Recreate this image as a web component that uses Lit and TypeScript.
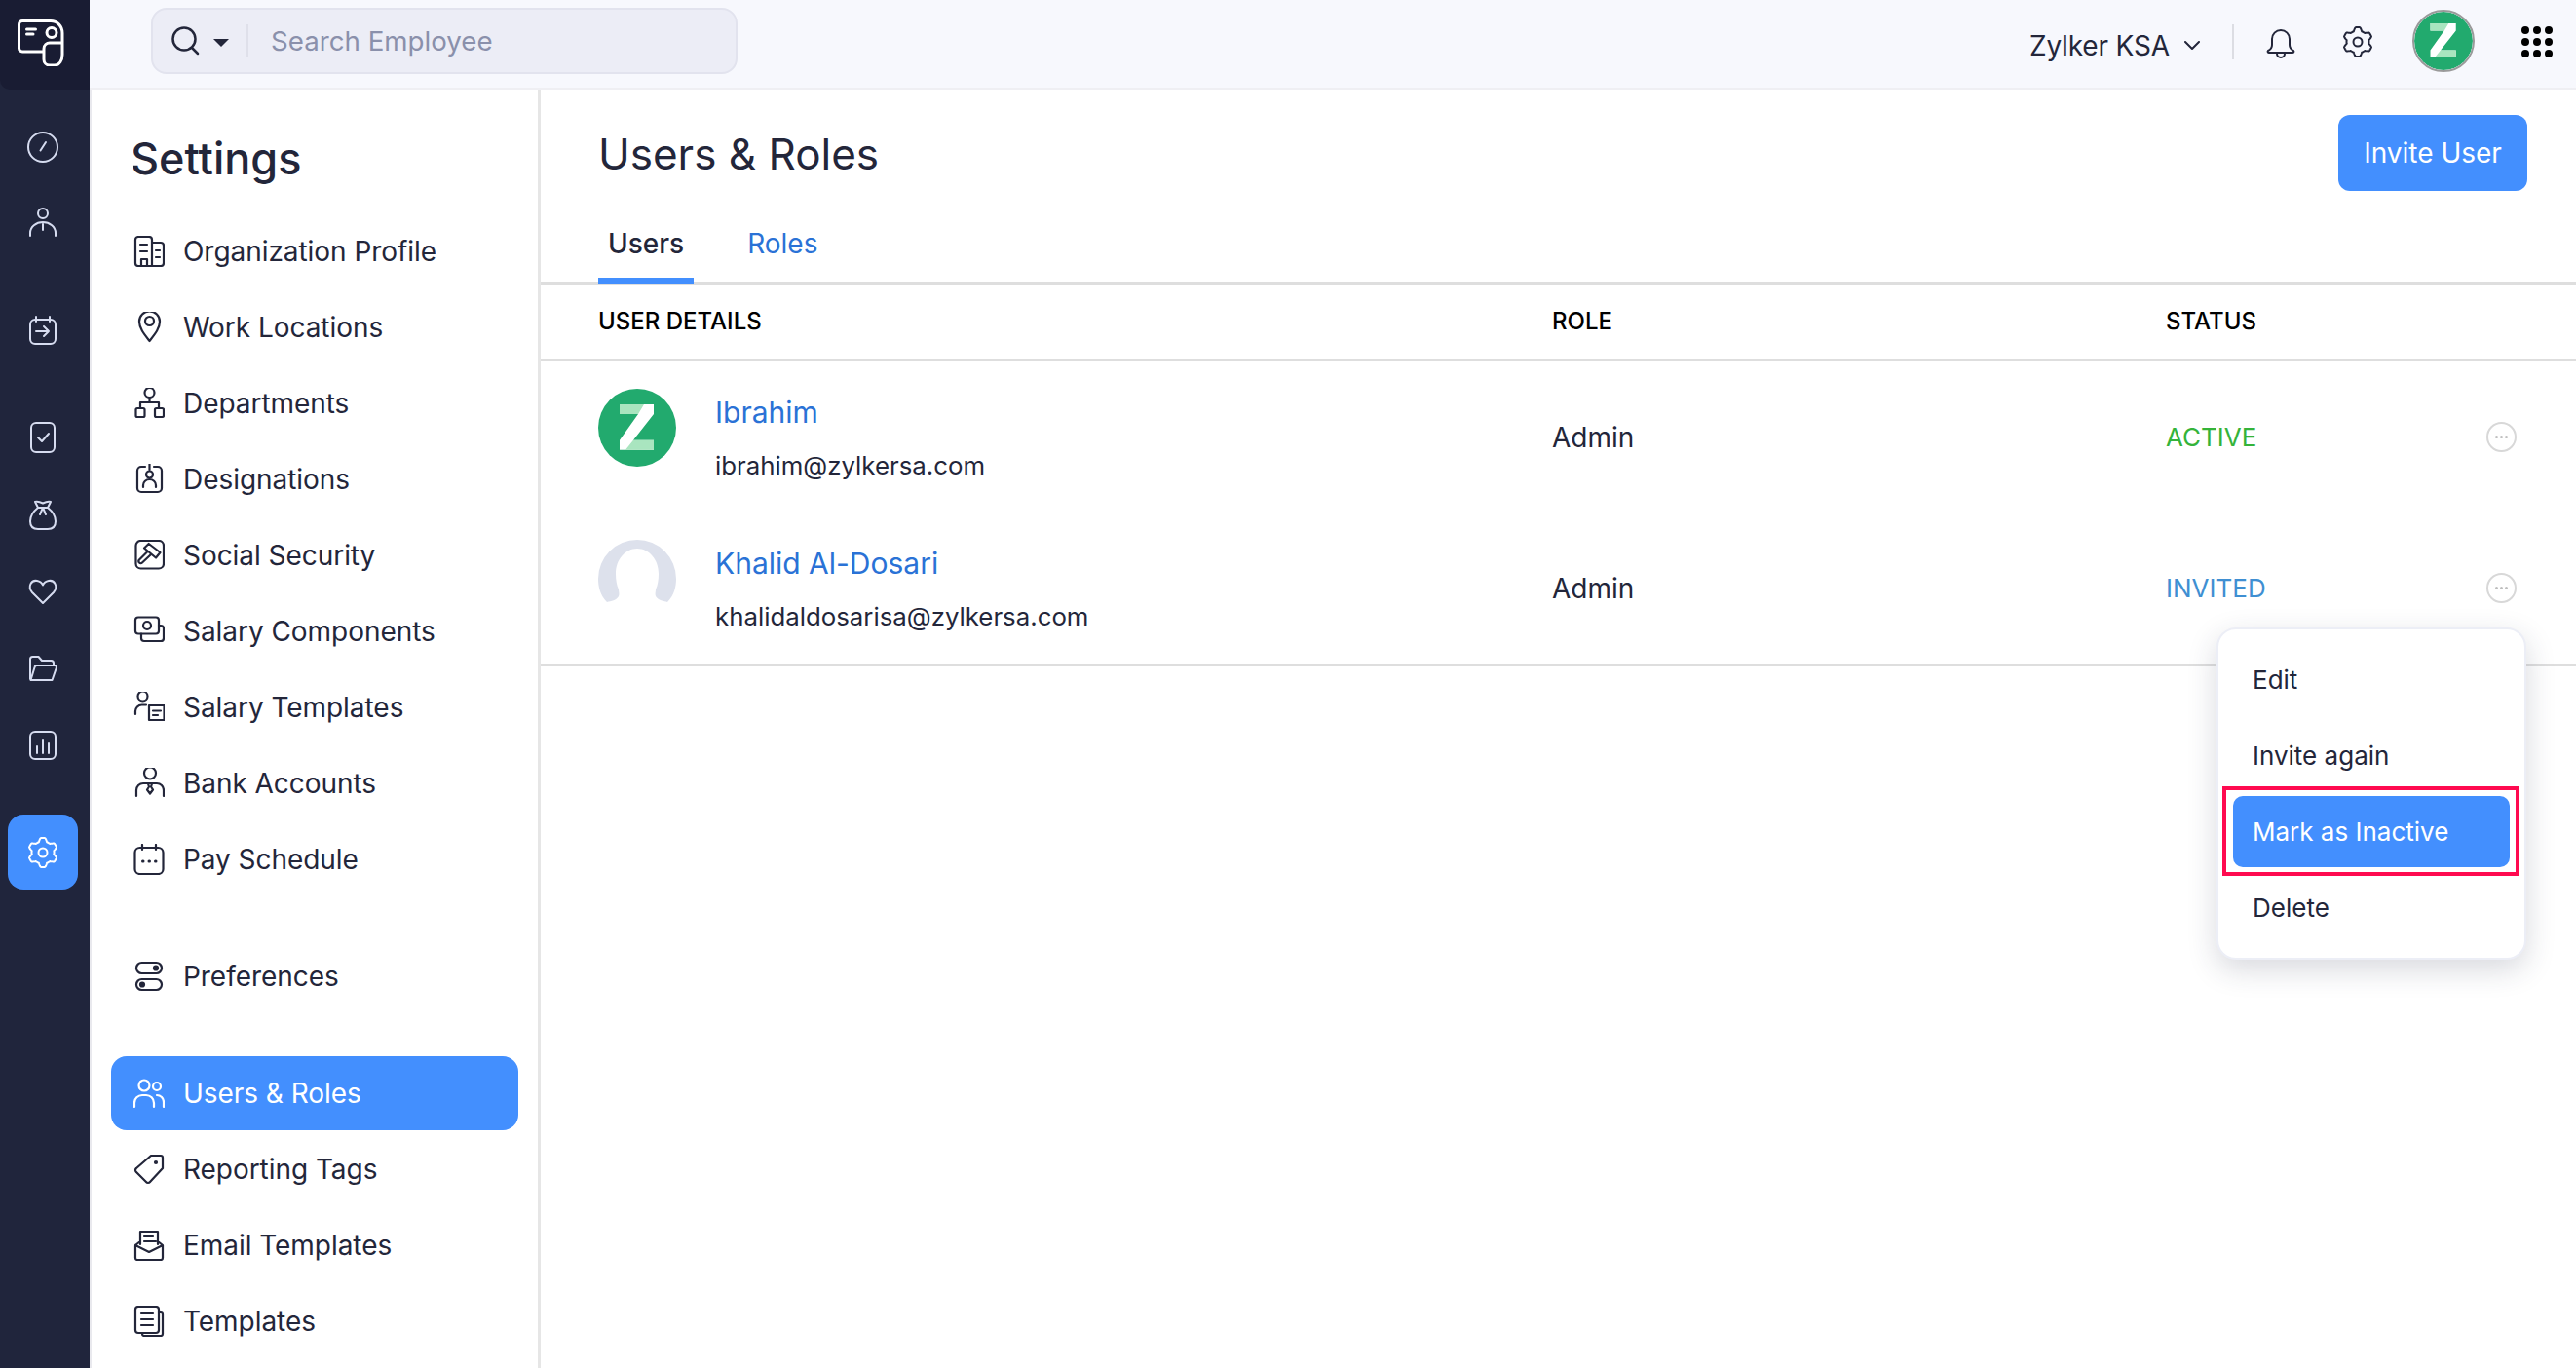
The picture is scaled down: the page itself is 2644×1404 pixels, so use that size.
import { LitElement, html, css, svg } from 'lit';
import { customElement } from 'lit/decorators.js';

// six lobed cog, sampled so the lobes stay round at any size
function gearPath(cx: number, cy: number, outer: number, inner: number) {
  const pts: string[] = [];
  for (let i = 0; i < 120; i++) {
    const a = (i / 120) * Math.PI * 2;
    const k = Math.min(1, Math.max(0, 0.5 + 0.85 * Math.cos(a * 6)));
    const r = inner + (outer - inner) * k;
    pts.push(`${(cx + r * Math.sin(a)).toFixed(2)} ${(cy - r * Math.cos(a)).toFixed(2)}`);
  }
  return `M${pts.join('L')}Z`;
}

const icon = (body: unknown, size = 32) => html`<svg
  class="ico"
  width=${size}
  height=${size}
  viewBox="0 0 32 32"
  fill="none"
  stroke="currentColor"
  stroke-width="2"
  stroke-linecap="round"
  stroke-linejoin="round"
>${body}</svg>`;

const gear = svg`<path d=${gearPath(16, 16, 15, 11.5)} /><circle cx="16" cy="16" r="4.5" />`;

const railIcons = {
  gauge: svg`<circle cx="16" cy="16" r="15" /><path d="M13.5 19.5 19 11" />`,
  person: svg`<circle cx="16" cy="7" r="5" /><path d="M3 30v-3a13 11 0 0 1 26 0v3M16 18v6" />`,
  calendar: svg`<rect x="3" y="5" width="26" height="25" rx="5" /><path d="M9 2v5M23 2v5M9 17h13M17 12l5 5-5 5" />`,
  check: svg`<rect x="4" y="1" width="24" height="30" rx="5" /><path d="M11 16l4 4 7-8" />`,
  bag: svg`<path d="M11 9C6 13 3 18 3 23c0 5 3 8 8 8h10c5 0 8-3 8-8 0-5-3-10-8-14M11 9 8 3c3-1 5 0 8 1.500C19 3 21 2 24 3l-3 6M11 9h10M16 9l-3 7M16 9l3 7" />`,
  heart: svg`<path d="M16 28 5 17C0 11 4 4 10 5c3 .5 5 2 6 4.500C17 7 19 5.500 22 5c6-1 10 6 5 12Z" />`,
  folder: svg`<path d="M3 27V6.500A2.500 2.500 0 0 1 5.500 4h6l3.500 4h9.500A2.500 2.500 0 0 1 27 10.500V13M3.500 28h22l4.500-13a2 2 0 0 0-2-2H10a2.500 2.500 0 0 0-2.500 2L3.500 28Z" />`,
  chart: svg`<rect x="3" y="2" width="26" height="28" rx="5" /><path d="M10 17v7M16 10v14M22 14v10" />`,
};

const menuIcons = {
  building: svg`<path d="M19 31H5a3 3 0 0 1-3-3V4a3 3 0 0 1 3-3h11a3 3 0 0 1 3 3v27ZM19 7h9a3 3 0 0 1 3 3v18a3 3 0 0 1-3 3h-9M7 9h7M7 16h7M8 31v-7h6v7M23 15h4M23 22h4" />`,
  pin: svg`<path d="M16.500 30C11 23 6 17 6 10A10.500 10.500 0 0 1 27 10c0 7-5 13-10.500 20Z" /><circle cx="16.500" cy="9.500" r="4.500" />`,
  tree: svg`<circle cx="16.500" cy="5" r="5" /><path d="M16.500 10v5M7 21v-6h19v6" /><rect x="2.500" y="21" width="9" height="9" rx="1.500" /><rect x="22" y="21" width="9" height="9" rx="1.500" />`,
  badge: svg`<path d="M12 3H8a4 4 0 0 0-4 4v18a4 4 0 0 0 4 4h17a4 4 0 0 0 4-4V7a4 4 0 0 0-4-4h-4M16.500 0v6" /><circle cx="16.500" cy="11" r="3.500" /><path d="M10 24v-2a6.500 6 0 0 1 13 0v2" />`,
  gavel: svg`<rect x="2.500" y="1" width="28.500" height="28.500" rx="5" /><path d="M15.700 4 11 8.500 23 18.500 27.500 13ZM14.500 12 6 20.500c-1 1-1 2 0 3s2 1 3 0l8.500-8" />`,
  cards: svg`<rect x="2" y="1.500" width="24" height="17" rx="3" /><path d="M26 10h2a3 3 0 0 1 3 3v10a3 3 0 0 1-3 3H11a3 3 0 0 1-3-3v-4.500" /><circle cx="14" cy="10" r="4" />`,
  personDoc: svg`<circle cx="9.500" cy="4.500" r="5" /><path d="M2 23v-3a6.500 6.500 0 0 1 6.500-6.500H13" /><rect x="16" y="14" width="15.500" height="15" /><path d="M20 19.500h8M20 24h5" />`,
  tie: svg`<circle cx="17" cy="5.500" r="6" /><path d="M3 29v-6a7 7 0 0 1 7-7h14a7 7 0 0 1 7 7v6M15 16.500l1 3-2 3 3 4 3-4-2-3 1-3" />`,
  calDots: svg`<rect x="1.500" y="4" width="29" height="27" rx="5" /><path d="M9 1v5M23 1v5" /><path d="M9.500 18h.5M16 18h.5M22.500 18h.5" stroke-width="3" />`,
  toggles: svg`<rect x="3" y="2" width="26" height="11" rx="5.500" /><rect x="3" y="19" width="26" height="11" rx="5.500" /><circle cx="23" cy="7.500" r="2" fill="currentColor" /><circle cx="9" cy="24.500" r="2" fill="currentColor" />`,
  users: svg`<circle cx="11" cy="8" r="5.500" /><circle cx="24" cy="9" r="4" /><path d="M1 30v-4a8 8 0 0 1 8-8h4a8 8 0 0 1 8 8v4M24 18a7 7 0 0 1 7 7v5" />`,
  tag: svg`<path d="M18 2h10a2 2 0 0 1 2 2v11L17 29a2.500 2.500 0 0 1-4 0L3 19a2.500 2.500 0 0 1 0-4Z" /><circle cx="23" cy="9" r="1" fill="currentColor" />`,
  mail: svg`<path d="M7 15V2h18v13M2 16v13a2 2 0 0 0 2 2h24a2 2 0 0 0 2-2V16l-14 7Zm0 0 5-4M30 16l-5-4M11 7h9M11 12h12" />`,
  docs: svg`<path d="M26 7h2a2 2 0 0 1 2 2v20a2 2 0 0 1-2 2H11a2 2 0 0 1-2-2v-1" /><rect x="2" y="1" width="24" height="27" rx="3" /><path d="M8 8h12M8 14h12M8 20h12" />`,
};

const zMark = (size: number) => html`<svg class="z" width=${size} height=${size} viewBox="0 0 80 80">
  <circle cx="40" cy="40" r="40" fill="#22aa6e" />
  <path d="M22 16H57V26L36 52.700H57V62.700H22V52.700L41 26H22Z" fill="#fff" />
  <path d="M22 16H47L41 26H22ZM36 52.700H57V62.700H28Z" fill="#a9e5bf" />
</svg>`;

const blankAvatar = html`<svg class="z" width="80" height="80" viewBox="0 0 80 80">
  <path
    d="M9 64C2 57 0 48 0 40a40 40 0 0 1 80 0c0 8-2 17-9 24-3-1-10-2-12-6-1-2 0-5 0-7 2-4 3-10 3-16C62 20 52 9 40 9S18 20 18 35c0 6 1 12 3 16 0 2 1 5 0 7-2 4-8 5-12 6Z"
    fill="#dde1ec"
  />
</svg>`;

const groupOne = [
  ['Organization Profile', menuIcons.building],
  ['Work Locations', menuIcons.pin],
  ['Departments', menuIcons.tree],
  ['Designations', menuIcons.badge],
  ['Social Security', menuIcons.gavel],
  ['Salary Components', menuIcons.cards],
  ['Salary Templates', menuIcons.personDoc],
  ['Bank Accounts', menuIcons.tie],
  ['Pay Schedule', menuIcons.calDots],
];

const groupThree = [
  ['Users & Roles', menuIcons.users, true],
  ['Reporting Tags', menuIcons.tag],
  ['Email Templates', menuIcons.mail],
  ['Templates', menuIcons.docs],
];

const users = [
  { name: 'Ibrahim', email: 'ibrahim@zylkersa.com', role: 'Admin', status: 'ACTIVE', avatar: zMark(80), cls: 'active' },
  { name: 'Khalid Al-Dosari', email: 'khalidaldosarisa@zylkersa.com', role: 'Admin', status: 'INVITED', avatar: blankAvatar, cls: 'invited' },
];

@customElement('app-root')
export class AppRoot extends LitElement {
  static styles = css`
    :host {
      display: block;
      width: 2644px;
      height: 1404px;
      overflow: hidden;
      font-family: Inter, 'Liberation Sans', sans-serif;
      color: #23263a;
      background: #fff;
    }
    * { box-sizing: border-box; }
    svg { display: block; flex: none; }
    .app { display: flex; height: 1404px; }

    .rail { width: 92px; flex: none; background: #20253c; color: #d6dcf0; display: flex; flex-direction: column; align-items: center; }
    .logo { width: 92px; height: 92px; background: #191c33; border-bottom-left-radius: 10px; color: #fff; display: flex; align-items: center; justify-content: center; padding-right: 8px; padding-bottom: 4px; }
    .rail-group { display: flex; flex-direction: column; align-items: center; margin-right: 4px; }
    .rail-group.first { margin-top: 20px; }
    .rail-group.second { margin-top: 34px; }
    .rail-group.third { margin-top: 33px; gap: 2px; }
    .rail-item { width: 72px; height: 77px; display: flex; align-items: center; justify-content: center; }
    .rail-item.on { margin-top: 33px; margin-right: 4px; background: #438ffe; border-radius: 16px; color: #fff; }

    .right { flex: 1; min-width: 0; display: flex; flex-direction: column; }
    .topbar { height: 92px; flex: none; background: #f7f8fd; border-bottom: 2px solid #efeff3; display: flex; align-items: center; padding-left: 63px; }
    .search { width: 602px; height: 68px; background: #ecedf6; border: 2px solid #e2e3ee; border-radius: 16px; display: flex; align-items: center; padding-left: 19px; margin-top: -6px; }
    .search .glass { color: #23263a; }
    .caret { width: 0; height: 0; border-left: 8px solid transparent; border-right: 8px solid transparent; border-top: 8px solid #23263a; margin-left: 13px; margin-top: 3px; }
    .search .bar { width: 2px; height: 34px; background: #dfe0ea; margin-left: 18px; }
    .search .hint { margin-left: 23px; font-size: 27.7px; color: #8a90ab; }
    .top-right { margin-left: auto; display: flex; align-items: center; }
    .org { font-size: 28px; letter-spacing: -0.15px; color: #23263a; margin-top: 4px; }
    .chev { margin-left: 15px; margin-top: 3px; color: #23263a; }
    .top-sep { width: 2px; height: 36px; background: #dcdde3; margin-left: 33px; margin-top: -4px; }
    .bell { margin-left: 33px; color: #23263a; margin-top: -4px; }
    .cog { margin-left: 48px; color: #23263a; margin-top: -4px; }
    .me { margin-left: 40px; width: 64px; height: 64px; border-radius: 50%; border: 2px solid #9a9a9a; margin-top: -6px; overflow: hidden; }
    .dots { margin-left: 48px; margin-right: 24px; display: grid; grid-template-columns: repeat(3, 8px); gap: 4px; margin-top: -4px; }
    .dots i { width: 8px; height: 8px; border-radius: 50%; background: #000; }

    .body { flex: 1; display: flex; min-height: 0; }
    .side { width: 463px; flex: none; border-left: 2px solid #e9e9ee; border-right: 3px solid #e6e6e6; padding: 43px 20px 0 20px; }
    .side h2 { margin: 0 0 29px 20px; font-size: 45px; line-height: 56px; font-weight: 500; color: #23263a; }
    .nav { display: flex; flex-direction: column; gap: 2px; }
    .nav + .nav { margin-top: 44px; }
    .nav-item { height: 76px; border-radius: 16px; display: flex; align-items: center; padding-left: 23px; gap: 19px; font-size: 28px; letter-spacing: -0.05px; color: #23263a; }
    .nav-item svg { stroke-width: 2.2; }
    .nav-item.on { background: #438ffe; color: #fff; }

    .main { flex: 1; min-width: 0; position: relative; }
    .head { display: flex; justify-content: space-between; align-items: center; height: 78px; margin-top: 26px; padding: 0 50px 0 59px; }
    .head h1 { margin: 2px 0 0; font-size: 44px; font-weight: 400; color: #23263a; }
    .invite { height: 78px; width: 194px; border-radius: 12px; background: #438ffe; color: #fff; display: flex; align-items: center; justify-content: center; font-size: 28px; }
    .tabs { display: flex; gap: 45px; margin-top: 26px; height: 70px; padding-left: 59px; border-bottom: 3px solid #dedede; }
    .tab { height: 69px; padding: 8px 10px 0; font-size: 28px; line-height: 40px; color: #2a72d6; }
    .tab.on { color: #23263a; font-weight: 500; border-bottom: 6px solid #438ffe; }

    .row { display: grid; grid-template-columns: 979px 630px 329px 31px; padding-left: 59px; }
    .thead { height: 79px; padding-bottom: 1px; border-bottom: 3px solid #dedede; align-items: center; font-size: 24px; font-weight: 500; color: #000; }
    .trow { height: 155px; align-items: center; font-size: 28px; color: #23263a; }
    .trow.last { height: 158px; border-bottom: 3px solid #dedede; }
    .who { display: flex; gap: 40px; align-self: start; padding-top: 28px; }
    .who-text { display: flex; flex-direction: column; gap: 7px; }
    .name { font-size: 30px; line-height: 48px; color: #2a72d6; }
    .mail { font-size: 25.8px; line-height: 48px; color: #23263a; }
    .active { color: #34b33a; font-size: 26px; }
    .invited { color: #3f8fd2; font-size: 26px; }
    .more { width: 31px; height: 31px; border: 2px solid #d8d8d8; border-radius: 50%; display: flex; align-items: center; justify-content: center; gap: 2px; }
    .more i { width: 3px; height: 3px; border-radius: 50%; background: #bdbdbd; }

    .menu { position: absolute; top: 552px; right: 51px; width: 318px; height: 341px; background: #fff; border: 2px solid #eceef6; border-radius: 20px; padding: 15px; box-shadow: 0 10px 30px rgba(40, 44, 70, 0.18); display: flex; flex-direction: column; gap: 4px; }
    .menu-item { position: relative; height: 74px; border-radius: 10px; display: flex; align-items: center; padding-left: 20px; font-size: 26px; color: #23263a; }
    .menu-item.on { background: #438ffe; color: #fff; }
    .callout { position: absolute; top: -10px; bottom: -9px; left: -11px; right: -10px; border: 4px solid #ff0a50; }
  `;

  renderNav(items: unknown[][]) {
    return html`<div class="nav">
      ${items.map(
        ([label, glyph, on]) => html`<div class="nav-item ${on ? 'on' : ''}">${icon(glyph)}<span>${label}</span></div>`,
      )}
    </div>`;
  }

  render() {
    return html`<div class="app">
      <div class="rail">
        <div class="logo">
          <svg width="48" height="48" viewBox="0 0 48 48" fill="none" stroke="currentColor" stroke-width="3" stroke-linecap="round" stroke-linejoin="round">
            <path d="M27 33H5a3.500 3.500 0 0 1-3.500-3.500V5A3.500 3.500 0 0 1 5 1.500H34C41 1.500 46 7 46 14V36c0 6-3 11-8 11H33c-4 0-6-3-6-6V30c0-4 3-6 6-6h13" />
            <path d="M9.500 10h9M9.500 15h6.500" />
            <circle cx="35" cy="13.500" r="5" />
          </svg>
        </div>
        <div class="rail-group first">
          <div class="rail-item">${icon(railIcons.gauge)}</div>
          <div class="rail-item">${icon(railIcons.person)}</div>
        </div>
        <div class="rail-group second">
          <div class="rail-item">${icon(railIcons.calendar)}</div>
        </div>
        <div class="rail-group third">
          <div class="rail-item">${icon(railIcons.check)}</div>
          <div class="rail-item">${icon(railIcons.bag)}</div>
          <div class="rail-item">${icon(railIcons.heart)}</div>
          <div class="rail-item">${icon(railIcons.folder)}</div>
          <div class="rail-item">${icon(railIcons.chart)}</div>
        </div>
        <div class="rail-item on">${icon(gear)}</div>
      </div>

      <div class="right">
        <div class="topbar">
          <div class="search">
            <svg class="glass" width="30" height="30" viewBox="0 0 30 30" fill="none" stroke="currentColor" stroke-width="2.500" stroke-linecap="round">
              <circle cx="13" cy="13" r="11.500" /><path d="m21 22 6 6" />
            </svg>
            <span class="caret"></span>
            <span class="bar"></span>
            <span class="hint">Search Employee</span>
          </div>
          <div class="top-right">
            <span class="org">Zylker KSA</span>
            <svg class="chev" width="16" height="10" viewBox="0 0 16 10" fill="none" stroke="currentColor" stroke-width="2" stroke-linecap="round" stroke-linejoin="round"><path d="m1 1 7 7 7-7" /></svg>
            <span class="top-sep"></span>
            <svg class="bell" width="30" height="34" viewBox="0 0 30 34" fill="none" stroke="currentColor" stroke-width="2" stroke-linecap="round" stroke-linejoin="round">
              <path d="M6 14a9 9 0 0 1 18 0v6c0 3 2 5 4 6 1 1 0 2-1 2H3c-1 0-2-1-1-2 2-1 4-3 4-6ZM11 29a4 4 0 0 0 8 0" />
            </svg>
            <span class="cog">${icon(gear)}</span>
            <div class="me">${zMark(60)}</div>
            <div class="dots">${Array.from({ length: 9 }, () => html`<i></i>`)}</div>
          </div>
        </div>

        <div class="body">
          <div class="side">
            <h2>Settings</h2>
            ${this.renderNav(groupOne)}
            ${this.renderNav([['Preferences', menuIcons.toggles]])}
            ${this.renderNav(groupThree)}
          </div>

          <div class="main">
            <div class="head">
              <h1>Users &amp; Roles</h1>
              <div class="invite">Invite User</div>
            </div>
            <div class="tabs">
              <div class="tab on">Users</div>
              <div class="tab">Roles</div>
            </div>
            <div class="row thead">
              <span>USER DETAILS</span><span>ROLE</span><span>STATUS</span>
            </div>
            ${users.map(
              (u, i) => html`<div class="row trow ${i === users.length - 1 ? 'last' : ''}">
                <div class="who">
                  ${u.avatar}
                  <div class="who-text">
                    <span class="name">${u.name}</span>
                    <span class="mail">${u.email}</span>
                  </div>
                </div>
                <span>${u.role}</span>
                <span class=${u.cls}>${u.status}</span>
                <div class="more"><i></i><i></i><i></i></div>
              </div>`,
            )}
            <div class="menu">
              <div class="menu-item">Edit</div>
              <div class="menu-item">Invite again</div>
              <div class="menu-item on">Mark as Inactive<span class="callout"></span></div>
              <div class="menu-item">Delete</div>
            </div>
          </div>
        </div>
      </div>
    </div>`;
  }
}
